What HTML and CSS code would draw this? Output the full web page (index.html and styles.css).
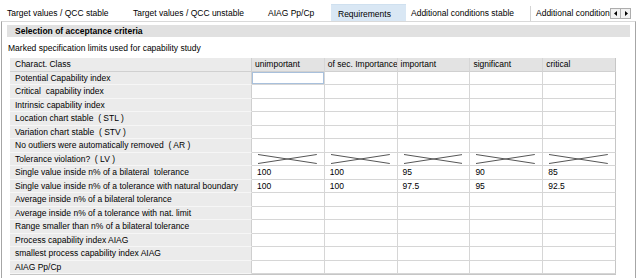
FILE: index.html
```html
<!DOCTYPE html>
<html>
<head>
<meta charset="utf-8">
<link rel="stylesheet" href="styles.css">
</head>
<body>
<div class="tabs">
  <div class="tab t1">Target values / QCC stable</div>
  <div class="tab t2">Target values / QCC unstable</div>
  <div class="tab t3">AIAG Pp/Cp</div>
  <div class="tab t4 active">Requirements</div>
  <div class="tab t5">Additional conditions stable</div>
  <div class="tab t6">Additional conditions unstable</div>
  <div class="scroll">
    <span class="arrow"><svg width="4" height="5" viewBox="0 0 4 5"><path d="M3 0 L0 2.5 L3 5 Z" fill="#000"/></svg></span>
    <span class="arrow"><svg width="4" height="5" viewBox="0 0 4 5"><path d="M1 0 L4 2.5 L1 5 Z" fill="#000"/></svg></span>
  </div>
</div>
<div class="panel">
  <div class="section">Selection of acceptance criteria</div>
  <div class="note">Marked specification limits used for capability study</div>
  <div class="grid">
    <div class="c h lab">Charact. Class</div><div class="c h">unimportant</div><div class="c h">of sec. Importance</div><div class="c h">important</div><div class="c h">significant</div><div class="c h last">critical</div>

    <div class="c lab">Potential Capability index</div><div class="c d focus"></div><div class="c d"></div><div class="c d"></div><div class="c d"></div><div class="c d last"></div>
    <div class="c lab">Critical  capability index</div><div class="c d"></div><div class="c d"></div><div class="c d"></div><div class="c d"></div><div class="c d last"></div>
    <div class="c lab">Intrinsic capability index</div><div class="c d"></div><div class="c d"></div><div class="c d"></div><div class="c d"></div><div class="c d last"></div>
    <div class="c lab">Location chart stable  ( STL )</div><div class="c d"></div><div class="c d"></div><div class="c d"></div><div class="c d"></div><div class="c d last"></div>
    <div class="c lab">Variation chart stable  ( STV )</div><div class="c d"></div><div class="c d"></div><div class="c d"></div><div class="c d"></div><div class="c d last"></div>
    <div class="c lab">No outliers were automatically removed  ( AR )</div><div class="c d"></div><div class="c d"></div><div class="c d"></div><div class="c d"></div><div class="c d last"></div>
    <div class="c lab">Tolerance violation?  ( LV )</div>
    <div class="c d x"><svg class="cross" viewBox="0 0 60 10" preserveAspectRatio="none"><path d="M0 0.5 L60 9.5 M0 9.5 L60 0.5" stroke="#555" stroke-width="1" fill="none" vector-effect="non-scaling-stroke"/></svg></div>
    <div class="c d x"><svg class="cross" viewBox="0 0 60 10" preserveAspectRatio="none"><path d="M0 0.5 L60 9.5 M0 9.5 L60 0.5" stroke="#555" stroke-width="1" fill="none" vector-effect="non-scaling-stroke"/></svg></div>
    <div class="c d x"><svg class="cross" viewBox="0 0 60 10" preserveAspectRatio="none"><path d="M0 0.5 L60 9.5 M0 9.5 L60 0.5" stroke="#555" stroke-width="1" fill="none" vector-effect="non-scaling-stroke"/></svg></div>
    <div class="c d x"><svg class="cross" viewBox="0 0 60 10" preserveAspectRatio="none"><path d="M0 0.5 L60 9.5 M0 9.5 L60 0.5" stroke="#555" stroke-width="1" fill="none" vector-effect="non-scaling-stroke"/></svg></div>
    <div class="c d x last"><svg class="cross" viewBox="0 0 60 10" preserveAspectRatio="none"><path d="M0 0.5 L60 9.5 M0 9.5 L60 0.5" stroke="#555" stroke-width="1" fill="none" vector-effect="non-scaling-stroke"/></svg></div>
    <div class="c lab">Single value inside n% of a bilateral  tolerance</div><div class="c d">100</div><div class="c d">100</div><div class="c d">95</div><div class="c d">90</div><div class="c d last">85</div>
    <div class="c lab">Single value inside n% of a tolerance with natural boundary</div><div class="c d">100</div><div class="c d">100</div><div class="c d">97.5</div><div class="c d">95</div><div class="c d last">92.5</div>
    <div class="c lab">Average inside n% of a bilateral tolerance</div><div class="c d"></div><div class="c d"></div><div class="c d"></div><div class="c d"></div><div class="c d last"></div>
    <div class="c lab">Average inside n% of a tolerance with nat. limit</div><div class="c d"></div><div class="c d"></div><div class="c d"></div><div class="c d"></div><div class="c d last"></div>
    <div class="c lab">Range smaller than n% of a bilateral tolerance</div><div class="c d"></div><div class="c d"></div><div class="c d"></div><div class="c d"></div><div class="c d last"></div>
    <div class="c lab">Process capability index AIAG</div><div class="c d"></div><div class="c d"></div><div class="c d"></div><div class="c d"></div><div class="c d last"></div>
    <div class="c lab">smallest process capability index AIAG</div><div class="c d"></div><div class="c d"></div><div class="c d"></div><div class="c d"></div><div class="c d last"></div>
    <div class="c lab">AIAG Pp/Cp</div><div class="c d"></div><div class="c d"></div><div class="c d"></div><div class="c d"></div><div class="c d last"></div>
  </div>
</div>
</body>
</html>
```
FILE: styles.css
```css
* { box-sizing: border-box; }
html, body { margin: 0; padding: 0; background: #fff; }
body {
  width: 640px;
  height: 278px;
  overflow: hidden;
  font-family: "Liberation Sans", Arial, sans-serif;
  font-size: 8.5px;
  color: #000;
}
.tabs {
  height: 21px;
  display: flex;
  align-items: flex-end;
  padding-left: 2px;
  position: relative;
}
.tab {
  height: 15px;
  line-height: 14px;
  padding-left: 5px;
  white-space: nowrap;
  overflow: hidden;
  flex: none;
}
.t1 { width: 126px; }
.t2 { width: 135px; }
.t3 { width: 68px; }
.t4 { width: 75px; padding-left: 7px; }
.t5 { width: 125px; border-right: 1px solid #d4d4d4; }
.t6 { width: 80px; }
.tab.active {
  height: 17px;
  line-height: 18px;
  background: #d9e7f4;
  border-top: 1px solid #cfe0ef;
}
.scroll {
  position: absolute;
  left: 610px;
  top: 8px;
  display: flex;
}
.arrow {
  width: 11px;
  height: 11px;
  border: 1px solid #adadad;
  background: #f0f0f0;
  display: flex;
  align-items: center;
  justify-content: center;
}
.arrow + .arrow { margin-left: -1px; }
.panel {
  margin-left: 1px;
  width: 635px;
  height: 257px;
  border-top: 1px solid #d9d9d9;
  border-left: 1px solid #a6a6a6;
  border-right: 1px solid #a6a6a6;
  padding: 3px 4px 0 5px;
}
.section {
  height: 12px;
  line-height: 12px;
  background: #e1e1e1;
  font-weight: bold;
  padding-left: 8px;
  width: 623px;
}
.note {
  height: 21px;
  line-height: 22px;
  padding-left: 1px;
}
.grid {
  margin-left: 3px;
  display: grid;
  grid-template-columns: 242px repeat(5, 72.8px);
  grid-auto-rows: 13.5px;
  width: 606px;
  border-bottom: 1px solid #c6c6c6;
}
.c {
  border-right: 1px solid #d6d6d6;
  border-bottom: 1px solid #d6d6d6;
  padding-left: 4px;
  line-height: 12.5px;
  white-space: pre;
  overflow: hidden;
}
.c.h { background: #e3e3e3; border-bottom-color: #d0d0d0; padding-left: 3px; }
.c.lab { background: #ebebeb; border-bottom-color: #f6f6f6; border-right-color: #cfcfcf; padding-left: 5px; }
.c.h.lab { border-bottom-color: #d0d0d0; }
.c.d { background: #fff; padding-left: 5px; }
.c.last { border-right-color: #c6c6c6; }
.c.focus { box-shadow: inset 0 0 0 1px #a8c0dc; }
.c.x { position: relative; }
.cross {
  position: absolute;
  left: 6px;
  right: 7px;
  top: 1px;
  height: 10px;
  width: calc(100% - 13px);
}
```
